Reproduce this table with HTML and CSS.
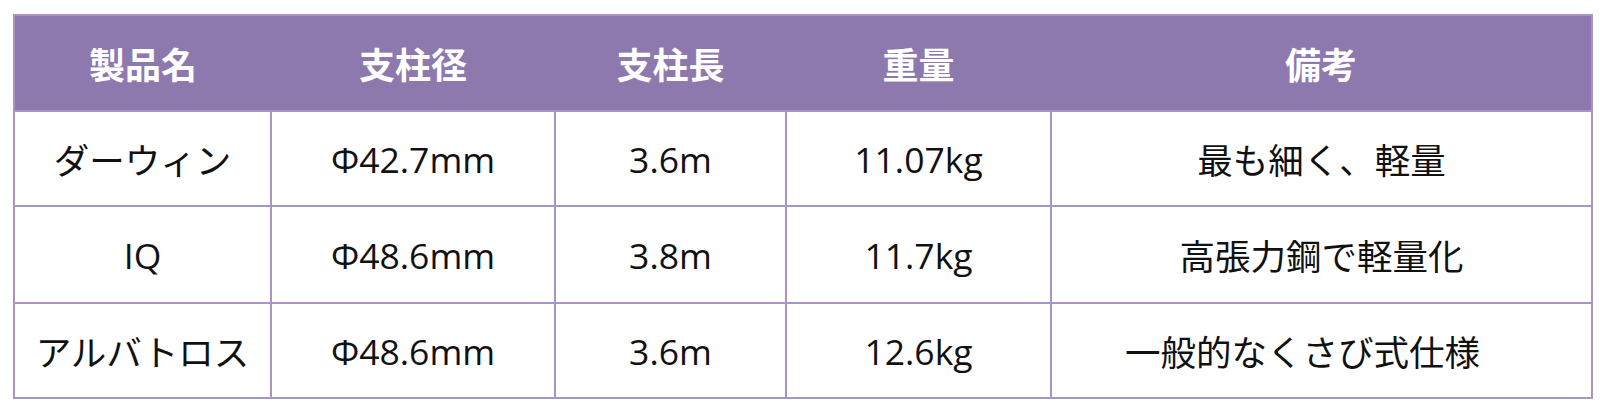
FILE: index.html
```html
<!DOCTYPE html>
<html lang="ja">
<head>
<meta charset="utf-8">
<link rel="stylesheet" href="styles.css">
</head>
<body>
<table class="spec">
  <colgroup>
    <col class="c1"><col class="c2"><col class="c3"><col class="c4"><col class="c5">
  </colgroup>
  <thead>
    <tr class="head">
      <th>製品名</th><th>支柱径</th><th>支柱長</th><th>重量</th><th>備考</th>
    </tr>
  </thead>
  <tbody>
    <tr class="r1"><td>ダーウィン</td><td>Φ42.7mm</td><td>3.6m</td><td>11.07kg</td><td>最も細く、軽量</td></tr>
    <tr class="r2"><td>IQ</td><td>Φ48.6mm</td><td>3.8m</td><td>11.7kg</td><td>高張力鋼で軽量化</td></tr>
    <tr class="r3"><td>アルバトロス</td><td>Φ48.6mm</td><td>3.6m</td><td>12.6kg</td><td class="note-wide">一般的なくさび式仕様</td></tr>
  </tbody>
</table>
</body>
</html>
```

FILE: styles.css
```css
html, body {
  margin: 0;
  padding: 0;
  background: #ffffff;
}
body {
  padding: 14px 0 0 13px;
  font-family: "Open Sans", "Noto Sans CJK JP", sans-serif;
}
.spec {
  border-collapse: collapse;
  table-layout: fixed;
  width: 1578px;
  border: 2px solid #a795c4;
}
.c1 { width: 257px; }
.c2 { width: 284px; }
.c3 { width: 231px; }
.c4 { width: 265px; }
.c5 { width: 541px; }
.spec th, .spec td {
  text-align: center;
  vertical-align: middle;
  padding: 0;
}
.spec th {
  background: #8e79af;
  color: #ffffff;
  font-family: "Noto Sans CJK JP", sans-serif;
  font-weight: 700;
  font-size: 36px;
  border: none;
}
.spec td {
  color: #111111;
  font-size: 35.5px;
  border: 2px solid #a795c4;
}
.spec td.note-wide {
  padding-right: 38px;
}
.head { height: 96px; }
.r1 { height: 95px; }
.r2 { height: 97px; }
.r3 { height: 95px; }
```
